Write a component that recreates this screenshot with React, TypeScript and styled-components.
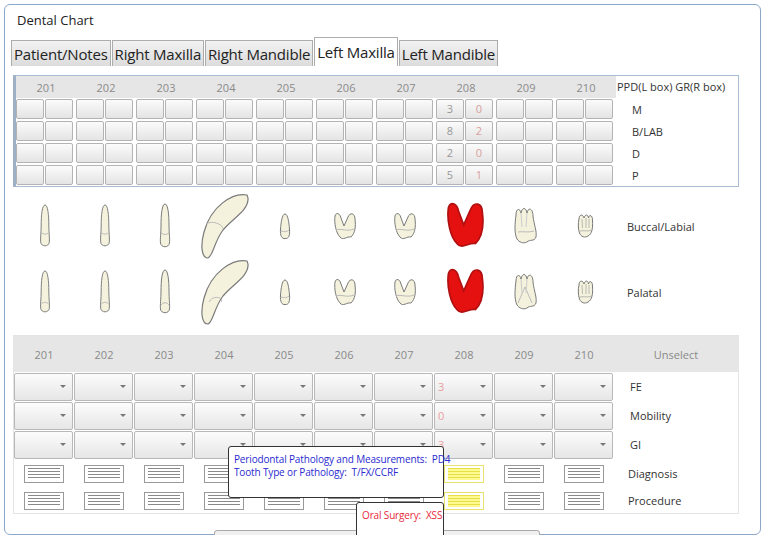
import React from "react";
import styled, { createGlobalStyle } from "styled-components";

const Global = createGlobalStyle`
  html, body { margin: 0; padding: 0; background: #fff; }
  body { font-family: "Open Sans", "Noto Sans", sans-serif; overflow: hidden; }
`;

const Panel = styled.div`
  position: relative;
  margin: 4px 0 0 4px;
  width: 757px;
  height: 531px;
  border: 1px solid #8ba8c8;
  border-radius: 6px;
  box-sizing: border-box;
  padding: 0 0 0 6px;
`;
const Title = styled.div`
  font-size: 13px;
  color: #222;
  padding: 6px 0 0 6px;
  height: 31px;
  box-sizing: border-box;
`;
const Tabs = styled.div`
  display: flex;
  align-items: flex-end;
  height: 30px;
  gap: 1px;
`;
const Tab = styled.div<{ $active?: boolean }>`
  font-size: 15px;
  letter-spacing: -0.2px;
  color: #222;
  padding: 0 2px;
  height: ${(p) => (p.$active ? 29 : 26)}px;
  line-height: ${(p) => (p.$active ? 29 : 26)}px;
  border: 1px solid #acacac;
  border-bottom: none;
  background: ${(p) => (p.$active ? "#fff" : "linear-gradient(#f2f2f2,#dcdcdc)")};
  box-sizing: border-box;
  white-space: nowrap;
`;
const Box = styled.div`
  margin-top: 9px;
  width: 726px;
  margin-left: 2px;
  border: 1px solid #a9bcd4;
  border-left: 3px solid #9eb0c6;
  box-sizing: border-box;
`;
const Row = styled.div<{ $h: number; $gray?: boolean }>`
  display: flex;
  align-items: center;
  height: ${(p) => p.$h}px;
  background: ${(p) => (p.$gray ? "#e6e6e6" : "transparent")};
`;
const Num = styled.div`
  width: 60px;
  text-align: center;
  font-size: 11px;
  color: #8a8a8a;
  font-family: "Open Sans", sans-serif;
`;
const Label = styled.div<{ $pad?: number; $size?: number; $gray?: boolean; $center?: boolean }>`
  flex: 1;
  padding-left: ${(p) => p.$pad ?? 12}px;
  font-size: ${(p) => p.$size ?? 11}px;
  color: ${(p) => (p.$gray ? "#888" : "#333")};
  text-align: ${(p) => (p.$center ? "center" : "left")};
  white-space: nowrap;
`;
const Pair = styled.div`
  width: 60px;
  display: flex;
  gap: 1px;
`;
const Cell = styled.div<{ $red?: boolean }>`
  width: 28px;
  height: 20px;
  border: 1px solid #b3b3b3;
  border-radius: 2px;
  box-sizing: border-box;
  background: linear-gradient(#fbfbfb, #e4e4e4);
  font-size: 11px;
  color: ${(p) => (p.$red ? "#d9a0a0" : "#999")};
  text-align: center;
  line-height: 18px;
`;
const TeethArea = styled.div`
  width: 726px;
  margin-left: 4px;
  margin-top: 6px;
`;
const ToothRow = styled.div`
  display: flex;
  align-items: center;
  height: 66px;
`;
const ToothSlot = styled.div`
  width: 60px;
  display: flex;
  justify-content: center;
  align-items: center;
  height: 66px;
`;
const Bottom = styled.div`
  margin-top: 10px;
  margin-left: 2px;
  width: 726px;
  border: 1px solid #e4e4e4;
  box-sizing: border-box;
`;
const Drop = styled.div`
  width: 59px;
  margin-right: 1px;
  height: 28px;
  border: 1px solid #b8b8b8;
  border-radius: 2px;
  box-sizing: border-box;
  background: linear-gradient(#fcfcfc, #e6e6e6);
  display: flex;
  align-items: center;
  justify-content: space-between;
  padding: 0 6px 0 3px;
  font-size: 11px;
  color: #eaa0a0;
  &::after {
    content: "";
    border-left: 3px solid transparent;
    border-right: 3px solid transparent;
    border-top: 3px solid #777;
  }
`;
const DocSlot = styled.div`
  width: 60px;
  display: flex;
  justify-content: center;
`;
const Doc = styled.div<{ $yellow?: boolean }>`
  width: 40px;
  height: 18px;
  border: 1px solid ${(p) => (p.$yellow ? "#e8e070" : "#999")};
  background: ${(p) =>
    p.$yellow
      ? "repeating-linear-gradient(#fffa90 0 2px, #e6df4a 2px 3px)"
      : "repeating-linear-gradient(#fff 0 2px, #8a8a8a 2px 3px)"};
  background-clip: content-box;
  padding: 2px 3px;
  box-sizing: border-box;
  background-color: #fff;
`;
const Tip = styled.div<{ $red?: boolean }>`
  position: absolute;
  background: #fff;
  border: 1px solid #333;
  border-radius: 3px;
  font-size: 10px;
  letter-spacing: -0.15px;
  line-height: 13px;
  padding: 6px 5px;
  box-sizing: border-box;
  color: ${(p) => (p.$red ? "#e8283c" : "#2a2ad0")};
  white-space: nowrap;
  z-index: 2;
`;
const StubButton = styled.div`
  position: absolute;
  left: 209px;
  top: 525px;
  width: 324px;
  height: 20px;
  border: 1px solid #aaa;
  border-radius: 3px;
  background: #f0f0f0;
`;

const nums = [201, 202, 203, 204, 205, 206, 207, 208, 209, 210];
const ppd: Record<number, string[][]> = {
  208: [["3", "0"], ["8", "2"], ["2", "0"], ["5", "1"]],
};

const fill = "#f4f2dc";
const st = "#7a7a7a";

function Tooth({ n, pal }: { n: number; pal?: boolean }) {
  if (n <= 203) {
    const h = n === 203 ? 46 : 44;
    return (
      <svg width="14" height={h} viewBox="0 0 14 46">
        <path d="M7 1 C4 1 3 12 3 22 C3 30 2 36 2.5 40 C3 45 11 45 11.5 40 C12 36 11 30 11 22 C11 12 10 1 7 1 Z" fill={fill} stroke={st} />
        <path d={pal ? "M3 36 C5 33 9 33 11 36" : "M3 30 C6 32 8 32 11 30"} fill="none" stroke="#bbb" />
      </svg>
    );
  }
  if (n === 204)
    return (
      <svg width="52" height="68" viewBox="0 0 52 68">
        <path d="M48 3 C34 0 12 14 5 40 C1 55 3 66 9 66 C14 64 15 50 24 38 C34 26 50 18 49 6 Z" fill={fill} stroke={st} strokeWidth="1.2" />
        <path d={pal ? "M10 44 C14 36 26 40 22 44" : "M7 32 C14 28 22 32 24 36"} fill="none" stroke="#bbb" />
      </svg>
    );
  if (n === 205)
    return (
      <svg width="12" height="27" viewBox="0 0 12 27">
        <path d="M6 1 C3 1 2 10 1.5 16 C1 23 3 26 6 25.5 C10 26 11 22 10.5 16 C10 10 9 1 6 1 Z" fill={fill} stroke={st} />
        <path d="M2 18 C5 19 8 19 10 17" fill="none" stroke="#bbb" />
      </svg>
    );
  if (n === 206 || n === 207 || n === 208) {
    const red = n === 208;
    const s = red ? 1.7 : 1;
    return (
      <svg width={24 * s} height={29 * s} viewBox="0 0 24 29">
        <path d="M2 4 C3 0 7 1 8 6 L11 14 L15 5 C17 0 22 1 22 7 C23 15 22 21 18 25 C14 24 10 29 7 25 C3 21 1 11 2 4 Z" fill={red ? "#e51010" : fill} stroke={red ? "#b01010" : st} />
        {!red && <path d="M3 18 C8 16 14 20 21 17" fill="none" stroke="#bbb" />}
      </svg>
    );
  }
  if (n === 209)
    return (
      <svg width="27" height="38" viewBox="0 0 27 38">
        <path d="M4 8 C4 1 8 1 9 6 C10 0 14 0 15 6 C16 0 21 1 21 9 C22 18 25 24 24 30 C22 35 18 32 15 35 C11 37 7 35 5 32 C2 26 3 16 4 8 Z" fill={fill} stroke={st} />
        <path d={pal ? "M6 30 L13 14 L20 30" : "M6 25 C11 24 16 26 22 24"} fill="none" stroke="#bbb" />
        <path d="M9 6 L10 20 M15 6 L14 20" fill="none" stroke="#ccc" />
      </svg>
    );
  return (
    <svg width="17" height="24" viewBox="0 0 17 24">
      <path d="M2 5 C2 0 6 0 7 4 C8 0 11 0 11.5 4 C12 0 16 1 15.5 7 C16 14 15 20 11 22 C8 24 4 23 2.5 19 C1 15 1 9 2 5 Z" fill={fill} stroke={st} />
      <path d="M5 5 L5.5 14 M9 4 L9 14 M12 5 L12 14 M3 17 C7 16 11 18 15 16" fill="none" stroke="#aaa" strokeWidth="0.8" />
    </svg>
  );
}

export default function App() {
  return (
    <>
      <Global />
      <Panel>
        <Title>Dental Chart</Title>
        <Tabs>
          <Tab>Patient/Notes</Tab>
          <Tab>Right Maxilla</Tab>
          <Tab>Right Mandible</Tab>
          <Tab $active>Left Maxilla</Tab>
          <Tab>Left Mandible</Tab>
        </Tabs>
        <Box>
          <Row $h={22} $gray>
            {nums.map((n) => (
              <Num key={n}>{n}</Num>
            ))}
            <Label $pad={1} $size={11} style={{ background: "#fff", height: 22, lineHeight: "22px" }}>
              PPD(L box) GR(R box)
            </Label>
          </Row>
          {["M", "B/LAB", "D", "P"].map((lab, r) => (
            <Row $h={22} key={lab}>
              {nums.map((n) => (
                <Pair key={n}>
                  <Cell>{ppd[n]?.[r][0]}</Cell>
                  <Cell $red={!!ppd[n]}>{ppd[n]?.[r][1]}</Cell>
                </Pair>
              ))}
              <Label $pad={16}>{lab}</Label>
            </Row>
          ))}
        </Box>
        <TeethArea>
          <ToothRow>
            {nums.map((n) => (
              <ToothSlot key={n}>
                <Tooth n={n} />
              </ToothSlot>
            ))}
            <Label $pad={12}>Buccal/Labial</Label>
          </ToothRow>
          <ToothRow>
            {nums.map((n) => (
              <ToothSlot key={n}>
                <Tooth n={n} pal />
              </ToothSlot>
            ))}
            <Label $pad={12}>Palatal</Label>
          </ToothRow>
        </TeethArea>
        <Bottom>
          <Row $h={36} $gray>
            {nums.map((n) => (
              <Num key={n}>{n}</Num>
            ))}
            <Label $gray $center $pad={0}>Unselect</Label>
          </Row>
          {[["FE", "3"], ["Mobility", "0"], ["GI", "3"]].map(([lab, v]) => (
            <Row $h={29} key={lab}>
              {nums.map((n) => (
                <Drop key={n}>
                  <span>{n === 208 ? v : ""}</span>
                </Drop>
              ))}
              <Label $pad={16}>{lab}</Label>
            </Row>
          ))}
          <Row $h={29}>
            {nums.map((n) => (
              <DocSlot key={n}>
                <Doc $yellow={n === 208} />
              </DocSlot>
            ))}
            <Label $pad={14}>Diagnosis</Label>
          </Row>
          <Row $h={25}>
            {nums.map((n) => (
              <DocSlot key={n}>
                <Doc $yellow={n === 208} />
              </DocSlot>
            ))}
            <Label $pad={14}>Procedure</Label>
          </Row>
        </Bottom>
        <Tip style={{ left: 223, top: 441, width: 216, height: 52 }}>
          Periodontal Pathology and Measurements:&nbsp; PD4
          <br />
          Tooth Type or Pathology:&nbsp; T/FX/CCRF
        </Tip>
        <Tip $red style={{ left: 351, top: 497, width: 88, height: 40 }}>
          Oral Surgery:&nbsp; XSS
        </Tip>
        <StubButton />
      </Panel>
    </>
  );
}
